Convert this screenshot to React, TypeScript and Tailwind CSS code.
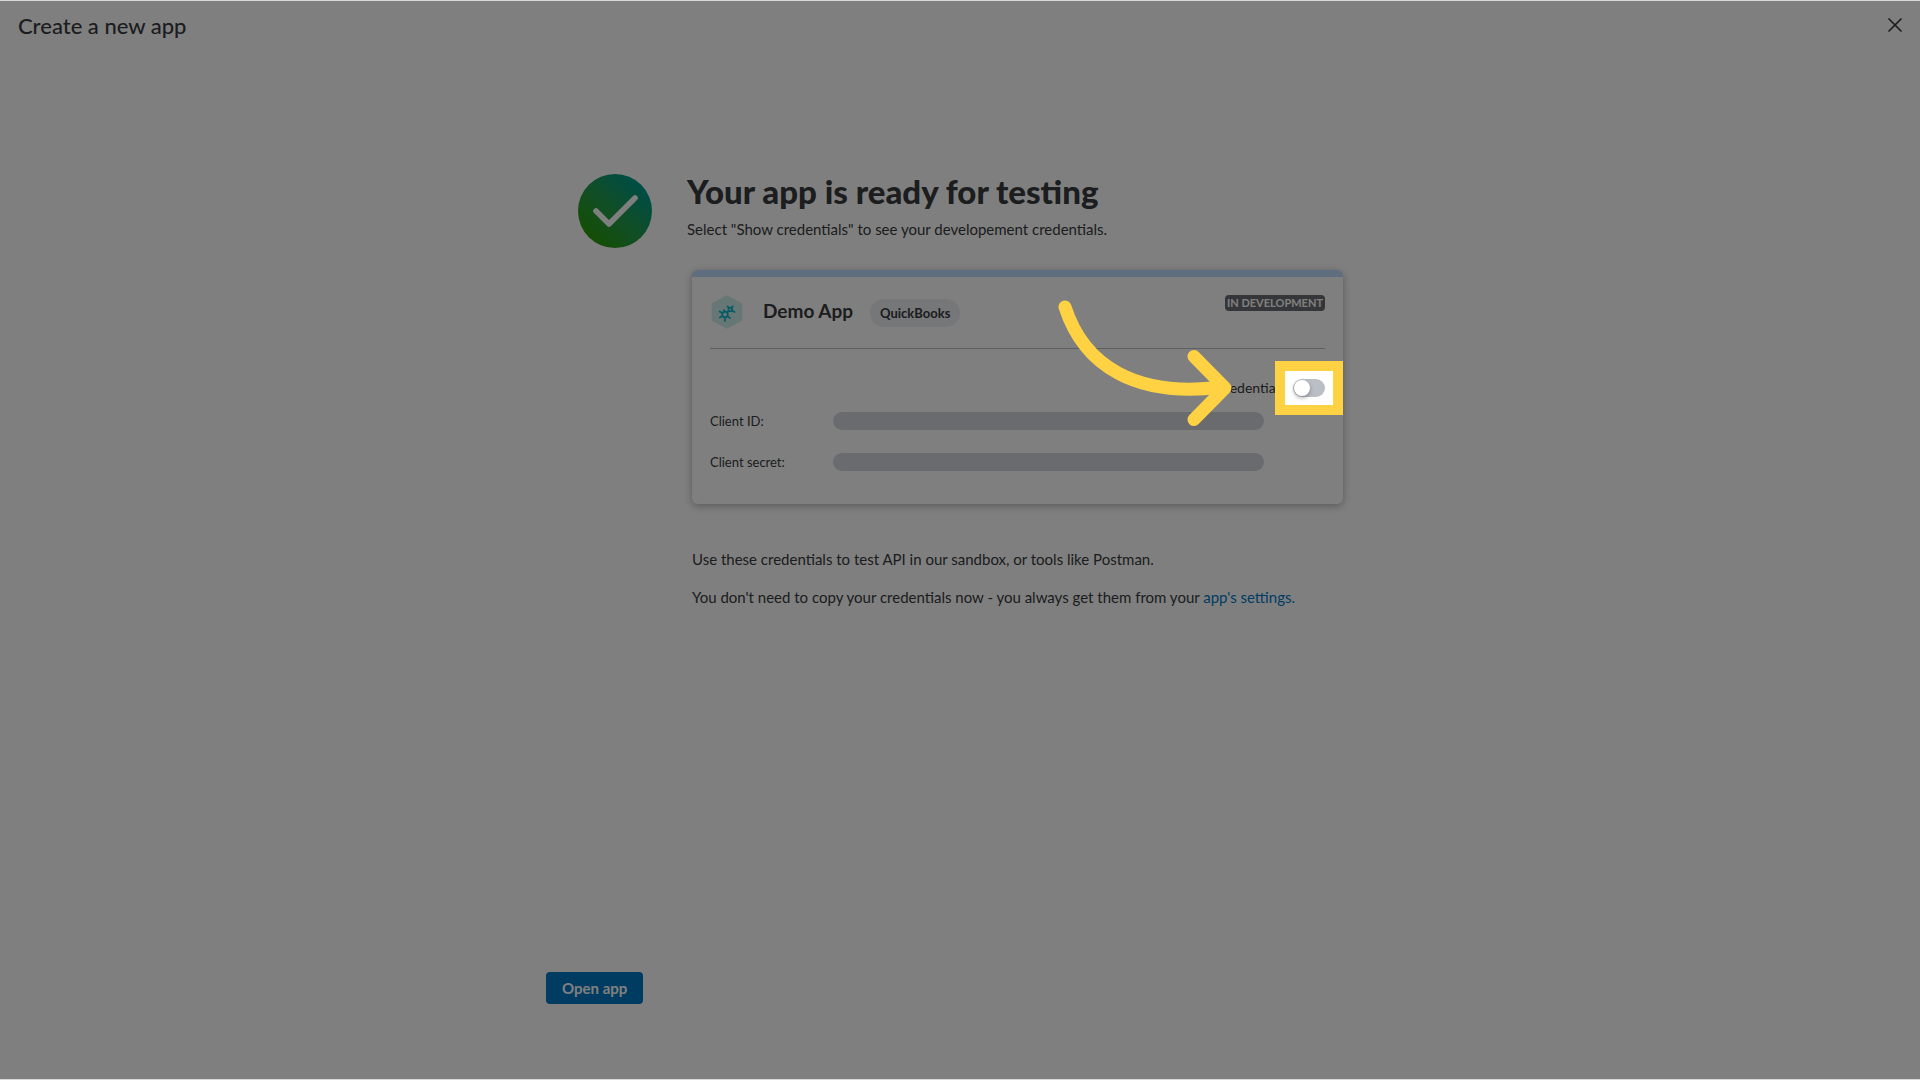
import { X } from 'lucide-react';

interface Credential {
  id: string;
  label: string;
}

const credentials: Credential[] = [
  { id: 'client-id', label: 'Client ID:' },
  { id: 'client-secret', label: 'Client secret:' },
];

const SuccessIcon = () => (
  <svg className="size-[75px] shrink-0" viewBox="0 0 75 75" fill="none" aria-hidden="true">
    <defs>
      <linearGradient id="success" x1="14" y1="66" x2="64" y2="14" gradientUnits="userSpaceOnUse">
        <stop stopColor="#2a9c0a" />
        <stop offset="0.5" stopColor="#229c4c" />
        <stop offset="1" stopColor="#009a8a" />
      </linearGradient>
    </defs>
    <circle cx="38" cy="38" r="37" fill="url(#success)" />
    <path d="M19 38L32 51L58 25" stroke="#fff" strokeWidth="5.5" strokeLinecap="round" strokeLinejoin="round" />
  </svg>
);

const AppIcon = () => (
  <svg className="ml-px h-[34px] w-8 shrink-0" viewBox="0 0 32 34" fill="none" aria-hidden="true">
    <path d="M16 1.5L30 9.2V24.8L16 32.5L2 24.8V9.2Z" fill="#cdeeea" stroke="#cdeeea" strokeWidth="2.5" strokeLinejoin="round" />
    <g stroke="#0ab4cc" strokeWidth="1.7" strokeLinecap="round">
      <circle cx="14" cy="19.5" r="2.8" />
      <path d="M11.5 18.1L8.6 16.5M11.4 20.9L8.8 22.5M14 22.5V25.9M16.4 21.1L19.2 23.1M16 17.5L17.8 15.9M13.6 16.7L13 15.1" />
      <circle cx="19.3" cy="14.5" r="1.9" />
      <path d="M18 12.9L16.4 11.3M20.6 13L21.8 11.1M21 15.5L23.6 16.9" />
    </g>
  </svg>
);

const Arrow = () => (
  <svg
    className="pointer-events-none absolute -top-20 right-[93px] h-[128px] w-[174px] max-w-none"
    viewBox="0 0 174 128"
    fill="none"
    stroke="#ffd243"
    strokeWidth="13"
    strokeLinecap="round"
    strokeLinejoin="round"
    aria-hidden="true"
  >
    <path d="M7 8C26 67 78 99 164 88" />
    <path d="M136 57.5L167 89L136 120.5" />
  </svg>
);

const CredentialsToggle = () => (
  <span className="relative z-20 flex">
    <span className="absolute -inset-[18px] border-10 border-[#ffd243] bg-white" />
    <input
      id="show-credentials"
      type="checkbox"
      role="switch"
      className="relative h-[18px] w-8 appearance-none rounded-full bg-[#babec5] before:absolute before:top-px before:left-px before:size-4 before:rounded-full before:bg-white before:shadow-[0_2px_4px_rgba(0,0,0,0.3)] checked:bg-[#2ca01c] checked:before:left-[15px]"
    />
    <Arrow />
  </span>
);

const CredentialsCard = () => (
  <section className="rounded-md border-t-[7px] border-[#bcdcff] bg-white px-[18px] pb-[22px] shadow-[0_2px_8px_rgba(0,0,0,0.3)]">
    <div className="flex h-[72px] items-start border-b border-[#babec5] pt-[18px]">
      <AppIcon />
      <h3 className="ml-5 text-[19px] leading-8 font-bold">Demo App</h3>
      <span className="mt-1 ml-[17px] rounded-full bg-[#eceef1] px-2.5 text-[13px] leading-7 font-bold">QuickBooks</span>
      <span className="ml-auto rounded bg-[#6b6c72] px-0.5 text-[11px] leading-4 font-bold text-white">IN DEVELOPMENT</span>
    </div>

    <div className="mt-[27px] flex h-6 items-center justify-end">
      <label htmlFor="show-credentials" className="mr-2 text-sm">
        Show credentials
      </label>
      <CredentialsToggle />
    </div>

    {credentials.map((credential) => (
      <div key={credential.id} className="flex h-[41px] items-center">
        <span className="w-[123px] pt-[3px] text-[13px]">{credential.label}</span>
        <span className="h-[18px] w-[431px] rounded-full bg-[#d4d7dc]" />
      </div>
    ))}
  </section>
);

const App = () => (
  <div className="relative flex min-h-screen flex-col border-y border-[#d8d9da] bg-white font-['Lato',sans-serif] text-[#393a3d]">
    <header className="flex h-12 items-center justify-between pr-[13px] pl-[18px]">
      <h1 className="text-[22px] font-medium">Create a new app</h1>
      <button type="button" aria-label="Close">
        <X size={24} strokeWidth={1.75} />
      </button>
    </header>

    <main className="mx-auto flex w-full max-w-[828px] grow flex-col pt-[124px] pb-[75px]">
      <div className="flex gap-[35px] px-[31px]">
        <SuccessIcon />
        <div className="grow">
          <h2 className="text-[33px] leading-9 font-black">Your app is ready for testing</h2>
          <p className="mt-2.5 text-[15px] leading-5">Select "Show credentials" to see your developement credentials.</p>
          <div className="mt-[31px] pl-[5px]">
            <CredentialsCard />
            <p className="mt-[45px] text-[15px] leading-5">
              Use these credentials to test API in our sandbox, or tools like Postman.
            </p>
            <p className="mt-[18px] text-[15px] leading-5">
              You don't need to copy your credentials now - you always get them from your{' '}
              <a href="#settings" className="text-[#0077c5]">
                app's settings.
              </a>
            </p>
          </div>
        </div>
      </div>

      <button type="button" className="mt-auto h-8 self-start rounded bg-[#0077c5] px-4 text-[15px] font-bold text-white">
        Open app
      </button>
    </main>

    <div className="pointer-events-none absolute inset-0 z-10 bg-black/50" />
  </div>
);

export default App;
